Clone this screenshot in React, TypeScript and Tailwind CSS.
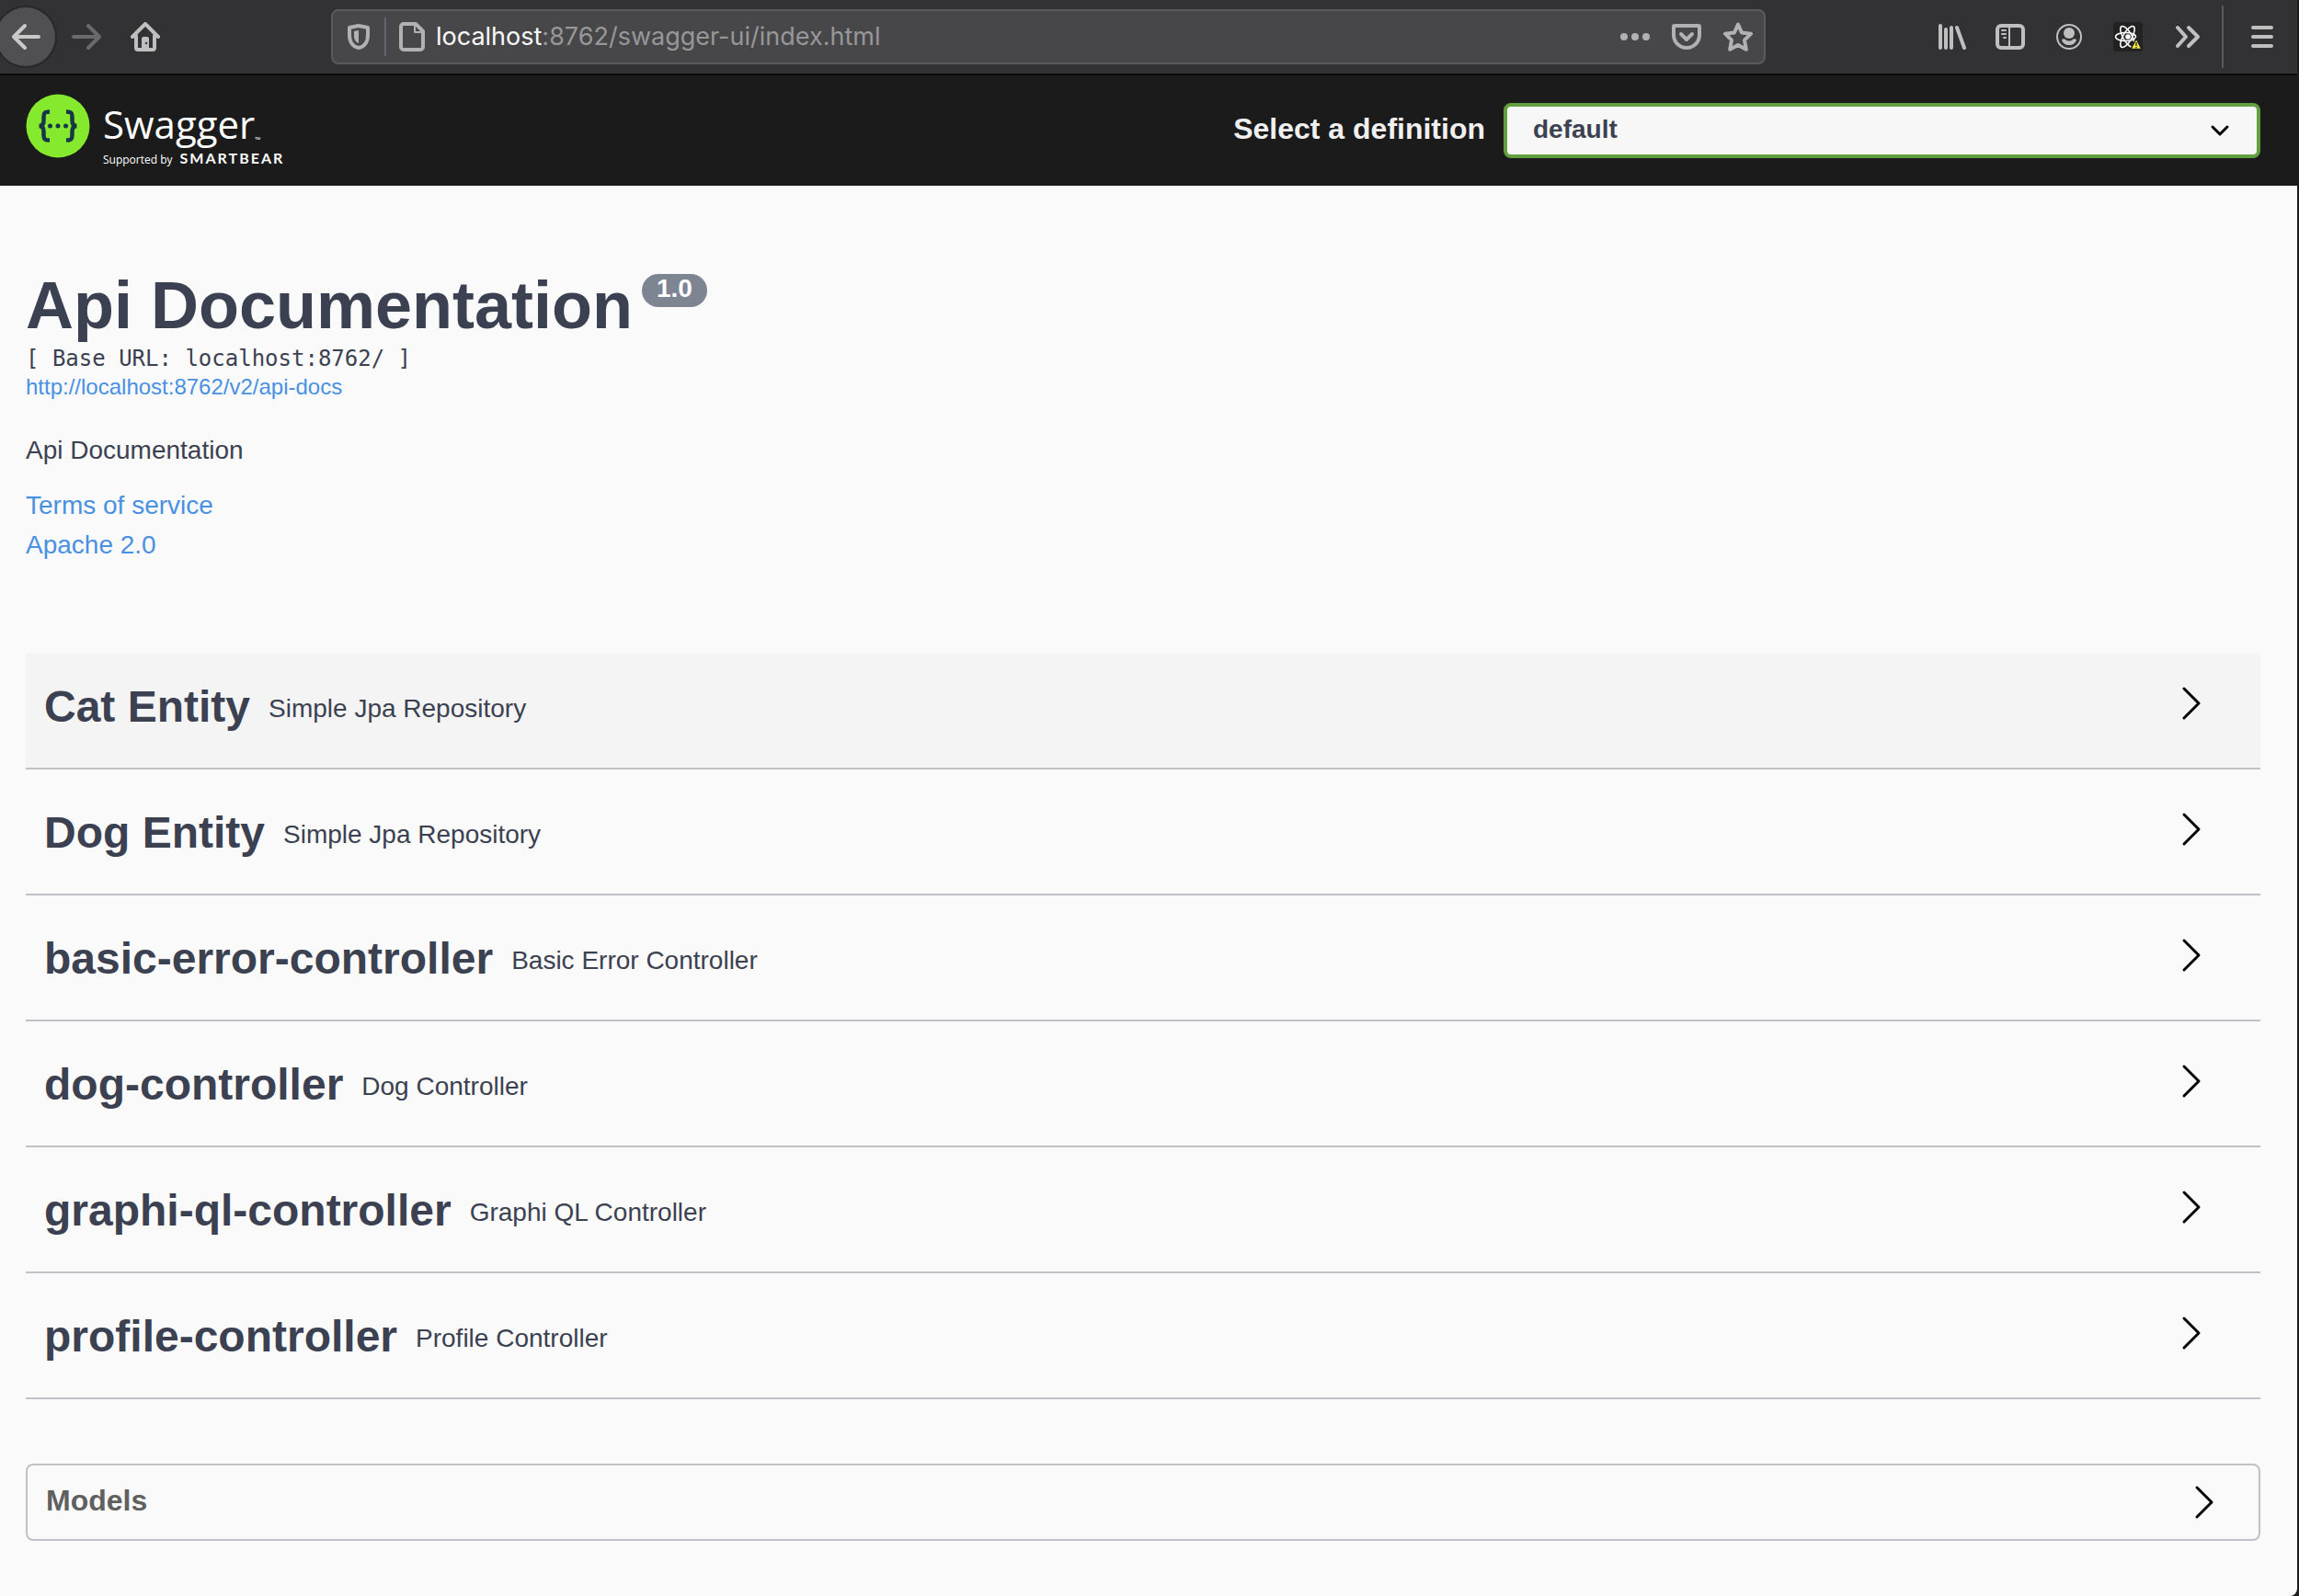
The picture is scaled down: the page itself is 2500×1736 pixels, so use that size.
import React from "react";

const sections = [
  { name: "Cat Entity", note: "Simple Jpa Repository" },
  { name: "Dog Entity", note: "Simple Jpa Repository" },
  { name: "basic-error-controller", note: "Basic Error Controller" },
  { name: "dog-controller", note: "Dog Controller" },
  { name: "graphi-ql-controller", note: "Graphi QL Controller" },
  { name: "profile-controller", note: "Profile Controller" },
];

const round = { strokeLinecap: "round", strokeLinejoin: "round" } as const;

function ChevronRight() {
  return (
    <svg className="block h-10 w-10 shrink-0" viewBox="0 0 40 40" fill="none" stroke="#000" strokeWidth="3" {...round}>
      <path d="M12 4 28 20 12 36" />
    </svg>
  );
}

function BackIcon() {
  return (
    <svg className="block size-8" viewBox="0 0 32 32" fill="none" stroke="#c9c9ca" strokeWidth="4" {...round}>
      <path d="M30 16H3M15 4 3 16l12 12" />
    </svg>
  );
}

function ForwardIcon() {
  return (
    <svg className="block size-8" viewBox="0 0 32 32" fill="none" stroke="#6a6a6c" strokeWidth="4" {...round}>
      <path d="M2 16h27M18 4l12 12-12 12" />
    </svg>
  );
}

function HomeIcon() {
  return (
    <svg className="block size-8" viewBox="0 0 32 32" fill="none" stroke="#bfbfc0" strokeWidth="4" {...round}>
      <path d="M2 16 16 2l14 14M6 15v13a2 2 0 0 0 2 2h16a2 2 0 0 0 2-2V15" />
      <path d="M12 31V18a2 2 0 0 1 2-2h4a2 2 0 0 1 2 2v13z" fill="#bfbfc0" stroke="none" />
      <circle cx="17" cy="23" r="1.200" fill="#323234" stroke="none" />
    </svg>
  );
}

function ShieldIcon() {
  return (
    <svg className="block h-8 w-6" viewBox="0 0 24 32" fill="none" stroke="#b1b1b3" strokeWidth="4" {...round}>
      <path d="M12 4 2 6v8c0 8 4 13 10 14 6-1 10-6 10-14V6z" />
      <path d="M12 9 7 10v5c0 4 2 7 5 8z" fill="#b1b1b3" stroke="none" />
    </svg>
  );
}

function PageIcon() {
  return (
    <svg className="block h-8 w-7" viewBox="0 0 28 32" fill="none" stroke="#b1b1b3" strokeWidth="4" {...round}>
      <path d="M5 2h13l8 8v17a3 3 0 0 1-3 3H5a3 3 0 0 1-3-3V5a3 3 0 0 1 3-3z" />
      <path d="M17 3v8h8" strokeWidth="2" />
    </svg>
  );
}

function DotsIcon() {
  return (
    <svg className="block size-8" viewBox="0 0 32 32" fill="#b1b1b3">
      <circle cx="4" cy="16" r="4" />
      <circle cx="16" cy="16" r="4" />
      <circle cx="28" cy="16" r="4" />
    </svg>
  );
}

function PocketIcon() {
  return (
    <svg className="block size-8" viewBox="0 0 32 32" fill="none" stroke="#b1b1b3" strokeWidth="4" {...round}>
      <path d="M3 4h26a1 1 0 0 1 1 1v9a14 14 0 0 1-28 0V5a1 1 0 0 1 1-1z" />
      <path d="m10 13 6 6 6-6" />
    </svg>
  );
}

function StarIcon() {
  return (
    <svg className="block size-8" viewBox="0 0 32 32" fill="none" stroke="#b1b1b3" strokeWidth="4" {...round}>
      <path d="m16 2.500 4 9 10 1.200-7 7 1.800 10L16 25l-8.800 4.700 1.800-10-7-7L12 11.500z" />
    </svg>
  );
}

function LibraryIcon() {
  return (
    <svg className="block size-8" viewBox="0 0 32 32" fill="none" stroke="#bfbfc0" strokeWidth="4" {...round}>
      <path d="M4 4v24M10 8v20M16 6v22M22 6l8 22" />
    </svg>
  );
}

function SidebarIcon() {
  return (
    <svg className="block size-8" viewBox="0 0 32 32" fill="none" stroke="#bfbfc0" strokeWidth="4" {...round}>
      <rect x="2" y="4" width="28" height="24" rx="4" />
      <path d="M15 4v24M7 9h4M7 13h4M9 17h2" strokeWidth="2" />
    </svg>
  );
}

function AccountIcon() {
  return (
    <svg className="block size-8" viewBox="0 0 32 32" fill="#bfbfc0">
      <circle cx="16" cy="16" r="13" fill="none" stroke="#bfbfc0" strokeWidth="2" />
      <circle cx="16" cy="12" r="6" />
      <path d="M8 19c2-1 3-1 4 0 2 2 6 2 8 0 1-1 2-1 4 0-1 4-4 6-8 6s-7-2-8-6z" />
    </svg>
  );
}

function ReactIcon() {
  return (
    <svg className="block size-8" viewBox="0 0 32 32" fill="none" stroke="#fff" strokeWidth="1.500">
      <rect width="32" height="32" rx="3" fill="#222" stroke="none" />
      <circle cx="16" cy="16" r="2.800" fill="#fff" stroke="none" />
      <ellipse cx="13.500" cy="16" rx="11" ry="4.500" />
      <ellipse cx="15.500" cy="16" rx="13" ry="4.800" transform="rotate(60 15.500 16)" />
      <ellipse cx="15.500" cy="16" rx="13" ry="4.800" transform="rotate(120 15.500 16)" />
      <path d="M25 18 31 29.500H19z" fill="#f7e943" stroke="#222" />
      <path d="M25 22v4M25 27v1.500" stroke="#333" />
    </svg>
  );
}

function OverflowIcon() {
  return (
    <svg className="block size-8" viewBox="0 0 32 32" fill="none" stroke="#bfbfc0" strokeWidth="4" {...round}>
      <path d="m6 6 9 10-9 10M18 6l10 10-10 10" />
    </svg>
  );
}

function MenuIcon() {
  return (
    <svg className="block size-8" viewBox="0 0 32 32" fill="none" stroke="#bfbfc0" strokeWidth="4" {...round}>
      <path d="M6 6h20M6 16h20M6 26h20" />
    </svg>
  );
}

function SwaggerMark() {
  return (
    <svg className="block size-[70px]" viewBox="0 0 70 70" fill="none" stroke="#173647" strokeWidth="4.500">
      <circle cx="35" cy="35" r="34.500" fill="#85ea2d" stroke="none" />
      <path d="M26 19.500c-5 0-6.500 1-6.500 5.500v4c0 4-1.500 6-5 6 3.500 0 5 2 5 6v4c0 4.500 1.500 5.500 6.500 5.500" />
      <path d="M44 19.500c5 0 6.500 1 6.500 5.500v4c0 4 1.500 6 5 6-3.500 0-5 2-5 6v4c0 4.500-1.500 5.500-6.500 5.500" />
      <g fill="#173647" stroke="none">
        <circle cx="26.500" cy="35" r="2.500" />
        <circle cx="35" cy="35" r="2.500" />
        <circle cx="43.500" cy="35" r="2.500" />
      </g>
    </svg>
  );
}

function Toolbar() {
  return (
    <nav className="flex h-[82px] items-center border-b-2 border-[#0c0c0d] bg-[#323234]">
      <button aria-label="Back" className="-ml-1 flex size-16 items-center justify-center rounded-full bg-[#505052] ring-2 ring-[#28282a]">
        <BackIcon />
      </button>
      <button aria-label="Forward" className="ml-[18px]"><ForwardIcon /></button>
      <button aria-label="Home" className="ml-8"><HomeIcon /></button>
      <div className="ml-[186px] flex h-[60px] flex-1 items-center rounded-lg border-2 border-[#5a5a5c] bg-[#474749] pl-4 pr-3">
        <button aria-label="Tracking protection"><ShieldIcon /></button>
        <span className="ml-4 h-[42px] w-0.5 bg-[#5f6470]" />
        <button aria-label="Site information" className="ml-3.5"><PageIcon /></button>
        <div className="ml-3 flex-1 font-['Inter',sans-serif] text-[27px] leading-9 text-[#97979a]">
          <span className="text-[#f9f9fa]">localhost</span>:8762/swagger-ui/index.html
        </div>
        <div className="flex gap-6">
          <button aria-label="Page actions"><DotsIcon /></button>
          <button aria-label="Save to Pocket"><PocketIcon /></button>
          <button aria-label="Bookmark"><StarIcon /></button>
        </div>
      </div>
      <div className="ml-[186px] flex gap-8">
        <button aria-label="Library"><LibraryIcon /></button>
        <button aria-label="Sidebars"><SidebarIcon /></button>
        <button aria-label="Account"><AccountIcon /></button>
        <button aria-label="React Developer Tools"><ReactIcon /></button>
        <button aria-label="More tools"><OverflowIcon /></button>
      </div>
      <span className="ml-[22px] h-[68px] w-0.5 bg-[#5a5a5c]" />
      <button aria-label="Menu" className="ml-[26px] mr-[22px]"><MenuIcon /></button>
    </nav>
  );
}

function Topbar() {
  return (
    <header className="flex h-[120px] items-start bg-[#1b1b1b] pl-7 pr-10">
      <a href="#" aria-label="Swagger" className="flex items-start gap-3.5 text-white">
        <span className="mt-5"><SwaggerMark /></span>
        <span className="mt-6 block font-['Open_Sans',sans-serif]">
          <span className="flex items-end">
            <span className="text-[42px] leading-[58px]">Swagger</span>
            <span className="text-[8px] leading-6">™</span>
          </span>
          <span className="flex items-baseline gap-2 leading-4">
            <span className="text-[12px]">Supported by</span>
            <span className="font-['Lato',sans-serif] text-[16px] font-bold tracking-[2px]">SMARTBEAR</span>
          </span>
        </span>
      </a>
      <div className="ml-auto mt-[30px] flex items-center">
        <label htmlFor="definition" className="pb-1 text-[32px] font-bold leading-9 text-[#f0f0f0]">Select a definition</label>
        <div className="relative ml-5">
          <select id="definition" className="block h-[60px] w-[823px] appearance-none rounded-lg border-4 border-[#62a03f] bg-[#f7f7f7] pb-0.5 pl-7 text-[28px] font-bold text-[#3b4151]">
            <option>default</option>
          </select>
          <svg className="pointer-events-none absolute right-8 top-[22px] h-4 w-6" viewBox="0 0 24 16" fill="none" stroke="#000" strokeWidth="3" {...round}>
            <path d="m4 4 8 8 8-8" />
          </svg>
        </div>
      </div>
    </header>
  );
}

export default function App() {
  return (
    <div className="min-h-screen bg-[#1c1c1c] pr-0.5 font-['Liberation_Sans',Arial,sans-serif] text-[#3b4151]">
      <div className="min-h-screen rounded-br-lg bg-[#fafafa]">
        <Toolbar />
        <Topbar />
        <main className="pl-7 pr-10">
          <section className="pt-[90px]">
            <h1 className="flex items-start text-[72px] font-bold leading-[80px]">
              Api Documentation
              <span className="ml-2.5 mt-1.5 rounded-full bg-[#7d8492] px-4 pb-1 text-[28px] leading-8 text-white">1.0</span>
            </h1>
            <pre className="mt-0.5 font-['DejaVu_Sans_Mono',monospace] text-[24px] leading-8">[ Base URL: localhost:8762/ ]</pre>
            <a href="#" className="block text-[24px] leading-[30px] text-[#4990e2]">http://localhost:8762/v2/api-docs</a>
            <p className="mt-9 text-[28px] leading-9">Api Documentation</p>
            <a href="#" className="mt-6 block text-[28px] leading-9 text-[#4990e2]">Terms of service</a>
            <a href="#" className="mt-[7px] block text-[28px] leading-9 text-[#4990e2]">Apache 2.0</a>
          </section>
          <section className="mt-[99px]">
            {sections.map((s, i) => (
              <div key={s.name} className={i === 0 ? "bg-[#f4f4f4]" : "mt-2.5"}>
                <button className="flex h-[127px] w-full items-center border-b-2 border-[#c1c1c7] pl-5 pr-[55px] text-left">
                  <span className="flex flex-1 items-center gap-5 pb-2">
                    <span className="text-[48px] font-bold leading-14">{s.name}</span>
                    <span className="pt-1 text-[28px] leading-9">{s.note}</span>
                  </span>
                  <span className="pb-4"><ChevronRight /></span>
                </button>
              </div>
            ))}
          </section>
          <button className="mt-[70px] flex h-[84px] w-full items-center justify-between rounded-lg border-2 border-[#c1c1c7] pl-5 pr-[39px] text-left">
            <span className="pb-1 text-[32px] font-bold leading-9 text-[#606060]">Models</span>
            <ChevronRight />
          </button>
        </main>
      </div>
    </div>
  );
}
